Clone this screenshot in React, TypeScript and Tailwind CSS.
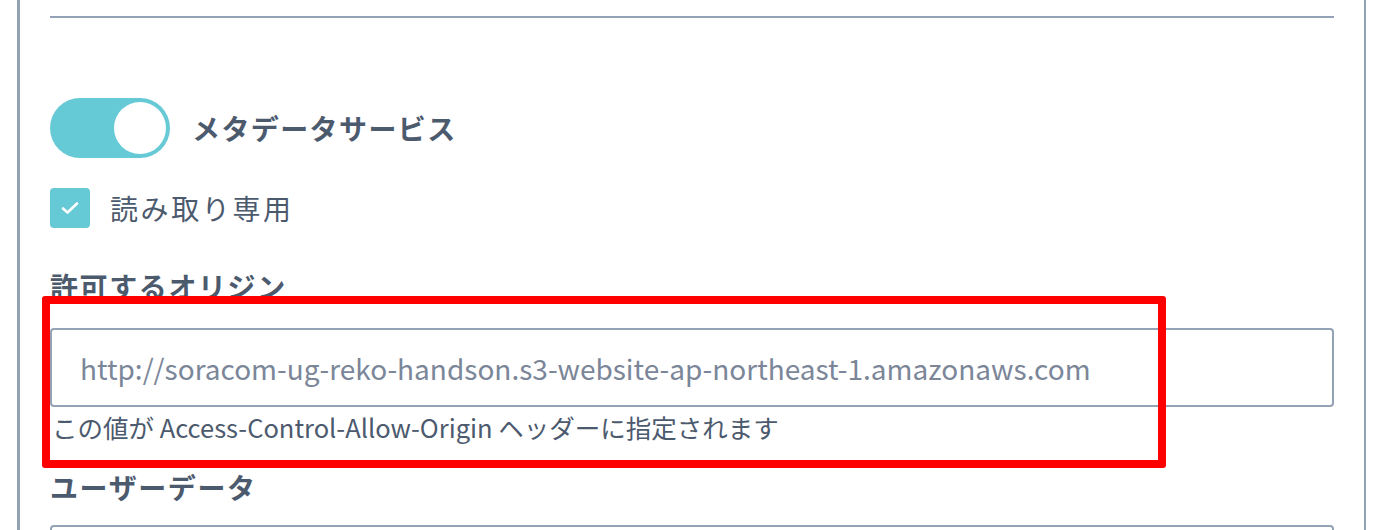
import React from 'react';

const font = '"Noto Sans CJK JP", "Noto Sans", sans-serif';

const Toggle: React.FC<{ on: boolean }> = ({ on }) => (
  <div className={`w-[120px] h-[60px] rounded-full flex items-center px-[4px] ${on ? 'bg-[#66cad6] justify-end' : 'bg-[#cbd5e0] justify-start'}`}>
    <div className="w-[52px] h-[52px] rounded-full bg-white" />
  </div>
);

const Checkbox: React.FC = () => (
  <div className="w-[40px] h-[40px] rounded-[4px] bg-[#66cad6] flex items-center justify-center">
    <svg width="18" height="14" viewBox="0 0 18 14" fill="none">
      <path d="M2 7.5 L6.5 11.5 L16 2.5" stroke="white" strokeWidth="2.6" strokeLinecap="round" strokeLinejoin="round" />
    </svg>
  </div>
);

const App: React.FC = () => {
  return (
    <div className="w-[1378px] h-[530px] overflow-hidden bg-white text-[#4c5a6e]" style={{ fontFamily: font }}>
      <div className="ml-[17px] w-[1349px] h-full border-l-[3px] border-r-[2px] border-[#93a3b5] px-[30px] pt-[16px] relative">
        <div className="h-[2px] bg-[#93a3b5]" />

        {/* Metadata service toggle */}
        <div className="mt-[80px] h-[60px] flex items-center gap-[22px]">
          <Toggle on />
          <span className="text-[28px] font-bold tracking-[1.4px] leading-none">メタデータサービス</span>
        </div>

        {/* Read only */}
        <div className="mt-[30px] h-[40px] flex items-center gap-[20px]">
          <Checkbox />
          <span className="text-[28px] tracking-[2.6px] leading-none">読み取り専用</span>
        </div>

        {/* Allowed origin */}
        <div className="mt-[38px] h-[40px] flex items-center text-[28px] font-bold tracking-[1.6px] leading-none">
          許可するオリジン
        </div>
        <div className="mt-[22px] h-[79px] border-[2px] border-[#93a3b5] rounded-[4px] flex items-center pl-[28px] text-[28px] text-[#7b8699]">
          http://soracom-ug-reko-handson.s3-website-ap-northeast-1.amazonaws.com
        </div>
        <div className="mt-[2px] h-[36px] pl-[2px] flex items-center text-[25.5px] leading-none">
          この値が Access-Control-Allow-Origin ヘッダーに指定されます
        </div>

        {/* User data */}
        <div className="mt-[22px] h-[40px] flex items-center text-[28px] font-bold tracking-[1.6px] leading-none">
          ユーザーデータ
        </div>
        <div className="mt-[18px] h-[79px] border-[2px] border-[#93a3b5] rounded-[4px]" />

        {/* Annotation */}
        <div className="absolute left-[22px] top-[296px] w-[1124px] h-[172px] border-[8px] border-[#ff0000] rounded-[3px]" />
      </div>
    </div>
  );
};

export default App;
